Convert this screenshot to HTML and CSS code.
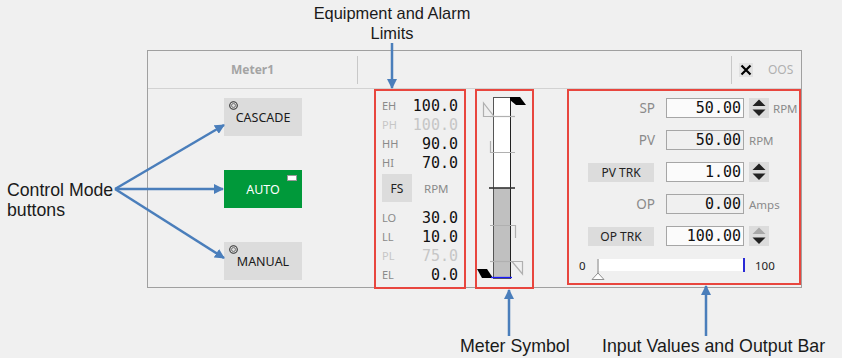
FILE: index.html
```html
<!DOCTYPE html>
<html>
<head>
<meta charset="utf-8">
<title>Meter faceplate</title>
<link rel="stylesheet" href="styles.css">
</head>
<body>
<div class="stage">
  <div class="panel">
    <div class="head">
      <div class="head-title">Meter1</div>
      <div class="head-sep"></div>
      <div class="head-fill"></div>
      <div class="head-sep"></div>
      <div class="head-tools">
        <svg class="x-icon" width="14" height="14" viewBox="0 0 14 14"><path d="M2.5 2.5 L11.5 11.5 M11.5 2.5 L2.5 11.5" stroke="#000" stroke-width="2.2" fill="none"/></svg>
        <span class="oos">OOS</span>
      </div>
    </div>
    <div class="body">
      <div class="modes">
        <div class="mode"><svg class="radio" width="9" height="9" viewBox="0 0 9 9"><circle cx="4.5" cy="4.5" r="3.8" fill="none" stroke="#333" stroke-width="1.1"/><circle cx="4.5" cy="4.5" r="2" fill="none" stroke="#777" stroke-width="1"/></svg>CASCADE</div>
        <div class="mode auto">AUTO<span class="ind"></span></div>
        <div class="mode"><svg class="radio" width="9" height="9" viewBox="0 0 9 9"><circle cx="4.5" cy="4.5" r="3.8" fill="none" stroke="#333" stroke-width="1.1"/><circle cx="4.5" cy="4.5" r="2" fill="none" stroke="#777" stroke-width="1"/></svg>MANUAL</div>
      </div>

      <div class="limits frame">
        <div class="lrow"><span class="lk">EH</span><span class="lv">100.0</span></div>
        <div class="lrow dis"><span class="lk">PH</span><span class="lv">100.0</span></div>
        <div class="lrow"><span class="lk">HH</span><span class="lv">90.0</span></div>
        <div class="lrow"><span class="lk">HI</span><span class="lv">70.0</span></div>
        <div class="fsrow"><span class="fs">FS</span><span class="fsunit">RPM</span></div>
        <div class="lrow"><span class="lk">LO</span><span class="lv">30.0</span></div>
        <div class="lrow"><span class="lk">LL</span><span class="lv">10.0</span></div>
        <div class="lrow dis"><span class="lk">PL</span><span class="lv">75.0</span></div>
        <div class="lrow"><span class="lk">EL</span><span class="lv">0.0</span></div>
      </div>

      <div class="meter frame">
        <svg width="55" height="196" viewBox="0 0 55 196">
          <rect x="16.5" y="6.5" width="17" height="181" fill="#fff" stroke="#555"/>
          <rect x="17" y="97" width="16" height="90" fill="#c0c0c0"/>
          <path d="M33.5 6.5 V187.5" stroke="#222" stroke-width="1"/>
          <g stroke="#b0b0b0" stroke-width="1.2" fill="none">
            <path d="M13 25.5 H38"/>
            <path d="M6.5 12 V25.5 H17 Z"/>
            <path d="M13.5 50 V61.5 H38"/>
            <path d="M13 134.5 H38.5 V147"/>
            <path d="M13 170.5 H35"/>
            <path d="M35 170.5 H45.5 V183 Z"/>
          </g>
          <path d="M12 97 H38" stroke="#333" stroke-width="1.6"/>
          <polygon points="33,6 43,6 49,14 39,14 33,9" fill="#000"/>
          <polygon points="0,178 10,178 16,187 5,187" fill="#000"/>
          <path d="M14 186.5 H35" stroke="#1a1aff" stroke-width="1.3"/>
        </svg>
      </div>

      <div class="io frame">
        <div class="irow">
          <div class="ilab"><span class="lab">SP</span></div>
          <div class="inp">50.00</div>
          <div class="spin"><svg width="20" height="20" viewBox="0 0 20 20"><polygon points="3.5,8 16.5,8 10,1.5" fill="#222"/><polygon points="3.5,11.5 16.5,11.5 10,18" fill="#222"/></svg></div>
          <span class="unit">RPM</span>
        </div>
        <div class="irow">
          <div class="ilab"><span class="lab">PV</span></div>
          <div class="inp ro">50.00</div>
          <span class="unit near">RPM</span>
        </div>
        <div class="irow">
          <div class="ilab"><span class="btn">PV TRK</span></div>
          <div class="inp">1.00</div>
          <div class="spin"><svg width="20" height="20" viewBox="0 0 20 20"><polygon points="3.5,8 16.5,8 10,1.5" fill="#222"/><polygon points="3.5,11.5 16.5,11.5 10,18" fill="#222"/></svg></div>
        </div>
        <div class="irow">
          <div class="ilab"><span class="lab">OP</span></div>
          <div class="inp ro">0.00</div>
          <span class="unit near">Amps</span>
        </div>
        <div class="irow">
          <div class="ilab"><span class="btn">OP TRK</span></div>
          <div class="inp">100.00</div>
          <div class="spin"><svg width="20" height="20" viewBox="0 0 20 20"><polygon points="3.5,8 16.5,8 10,1.5" fill="#a8a8a8"/><polygon points="3.5,11.5 16.5,11.5 10,18" fill="#222"/></svg></div>
        </div>
        <div class="barrow">
          <span class="bmin">0</span>
          <div class="bar">
            <svg class="pointer" width="14" height="21" viewBox="0 0 14 21"><path d="M7 0 V14" stroke="#909090" stroke-width="1.2"/><polygon points="7,14 1,20.5 13,20.5" fill="#fff" stroke="#909090" stroke-width="1"/></svg>
          </div>
          <div class="bar-end"></div>
          <span class="bmax">100</span>
        </div>
      </div>
    </div>
  </div>

  <svg class="arrows" width="842" height="358" viewBox="0 0 842 358">
    <defs>
      <marker id="ah" viewBox="0 0 10 10" refX="9" refY="5" markerWidth="4" markerHeight="4" orient="auto">
        <path d="M0 0 L10 5 L0 10 z" fill="#4a7ebb"/>
      </marker>
    </defs>
    <g stroke="#4a7ebb" stroke-width="2.5" fill="none" marker-end="url(#ah)">
      <path d="M392 43 V88"/>
      <path d="M115 189 L224 125"/>
      <path d="M115 189 H223"/>
      <path d="M115 189 L224 258"/>
      <path d="M509 336 V290"/>
      <path d="M706 336 V286"/>
    </g>
  </svg>
  <div class="note note-top">Equipment and Alarm<br>Limits</div>
  <div class="note note-left">Control Mode<br>buttons</div>
  <div class="note note-meter">Meter Symbol</div>
  <div class="note note-io">Input Values and Output Bar</div>
</div>
</body>
</html>
```

FILE: styles.css
```css
* { box-sizing: border-box; }
html, body { margin: 0; padding: 0; }
body {
  background: #f0f0f0;
  width: 842px;
  height: 358px;
  overflow: hidden;
  font-family: "Noto Sans", "Open Sans", sans-serif;
  color: #1a1a1a;
}
.stage {
  position: relative;
  width: 842px;
  height: 358px;
  padding: 50px 0 0 147px;
}
.panel {
  width: 655px;
  height: 238px;
  border: 1px solid #a0a0a0;
  background: #f0f0f0;
}
.head {
  height: 38px;
  border-bottom: 1px solid #d2d2d2;
  display: flex;
  align-items: center;
}
.head-title {
  width: 209px;
  text-align: center;
  font-size: 12px;
  font-weight: bold;
  color: #a4a4a4;
}
.head-sep {
  width: 1px;
  height: 28px;
  background: #c8c8c8;
}
.head-fill { flex: 1; }
.head-tools {
  width: 69px;
  display: flex;
  align-items: center;
  padding-left: 7px;
}
.x-icon { background: #e2e2e2; display: block; }
.oos {
  margin-left: 15px;
  font-size: 12px;
  color: #b0b0b0;
}
.body {
  display: flex;
  align-items: flex-start;
  height: 198px;
}
.frame {
  border: 2px solid #e8463e;
}
.modes {
  margin-left: 76px;
  width: 78px;
  padding-top: 9px;
  display: flex;
  flex-direction: column;
  gap: 34px;
}
.mode {
  position: relative;
  height: 38px;
  background: #dcdcdc;
  display: flex;
  align-items: center;
  justify-content: center;
  font-size: 12.5px;
  color: #1a1a1a;
  padding-top: 1px;
}
.mode.auto {
  background: #00993a;
  color: #fff;
}
.radio {
  position: absolute;
  left: 5px;
  top: 3px;
  display: block;
}
.ind {
  position: absolute;
  left: 63px;
  top: 5px;
  width: 10px;
  height: 6px;
  background: #fff;
  border: 1px solid #999;
}
.limits {
  margin-left: 72px;
  width: 92px;
  height: 200px;
  padding: 5px 6px 0 6px;
}
.lrow {
  height: 19px;
  display: flex;
  align-items: center;
  justify-content: space-between;
}
.lk {
  font-size: 11px;
  color: #8a8a8a;
}
.lv {
  font-family: "DejaVu Sans Mono", monospace;
  font-size: 15px;
  color: #111;
}
.lrow.dis .lk, .lrow.dis .lv { color: #c6c6c6; }
.fsrow {
  height: 28px;
  margin: 2px 0 6px;
  display: flex;
  align-items: center;
}
.fs {
  width: 30px;
  height: 28px;
  background: #dcdcdc;
  display: flex;
  align-items: center;
  justify-content: center;
  font-size: 12px;
  color: #222;
}
.fsunit {
  margin-left: 12px;
  font-size: 11.5px;
  color: #8a8a8a;
}
.meter {
  margin-left: 9px;
  width: 59px;
  height: 200px;
}
.meter svg { display: block; }
.io {
  margin-left: 33px;
  width: 234px;
  height: 196px;
  padding-top: 7px;
}
.irow {
  height: 20px;
  margin-bottom: 12px;
  display: flex;
  align-items: center;
}
.ilab {
  width: 85px;
  margin-right: 12px;
  display: flex;
  justify-content: flex-end;
}
.lab {
  font-size: 13.5px;
  color: #8a8a8a;
  margin-right: -1px;
}
.btn {
  width: 66px;
  height: 19px;
  background: #dcdcdc;
  display: flex;
  align-items: center;
  justify-content: center;
  font-size: 12px;
  color: #222;
}
.inp {
  width: 78px;
  height: 20px;
  border: 1px solid #a6a6a6;
  background: #fbfbfb;
  text-align: right;
  padding-right: 2px;
  font-family: "DejaVu Sans Mono", monospace;
  font-size: 15px;
  line-height: 18px;
  color: #111;
}
.inp.ro { background: #f0f0f0; }
.spin {
  margin-left: 5px;
  width: 20px;
  height: 20px;
  background: #dcdcdc;
}
.spin svg { display: block; }
.unit {
  margin-left: 4px;
  font-size: 11.5px;
  color: #8a8a8a;
}
.unit.near { margin-left: 5px; }
.barrow {
  height: 14px;
  display: flex;
  align-items: center;
}
.bmin {
  width: 28px;
  padding-left: 10px;
  font-size: 11.5px;
  color: #222;
}
.bar {
  position: relative;
  width: 146px;
  height: 12px;
  background: #fff;
}
.pointer {
  position: absolute;
  left: -6px;
  top: 0;
}
.bar-end {
  width: 2px;
  height: 14px;
  background: #2a2ad6;
}
.bmax {
  margin-left: 10px;
  font-size: 11.5px;
  color: #222;
}
.arrows {
  position: absolute;
  left: 0;
  top: 0;
  pointer-events: none;
}
.note {
  position: absolute;
  font-family: "Liberation Sans", Arial, sans-serif;
  color: #1a1a1a;
  line-height: 20px;
  white-space: nowrap;
}
.note-top {
  left: 292px;
  top: 3px;
  width: 200px;
  text-align: center;
  font-size: 16.4px;
}
.note-left {
  left: 7px;
  top: 180px;
  font-size: 17.7px;
}
.note-meter {
  left: 460px;
  top: 336px;
  font-size: 17.8px;
}
.note-io {
  left: 602px;
  top: 336px;
  font-size: 17.8px;
}
```
